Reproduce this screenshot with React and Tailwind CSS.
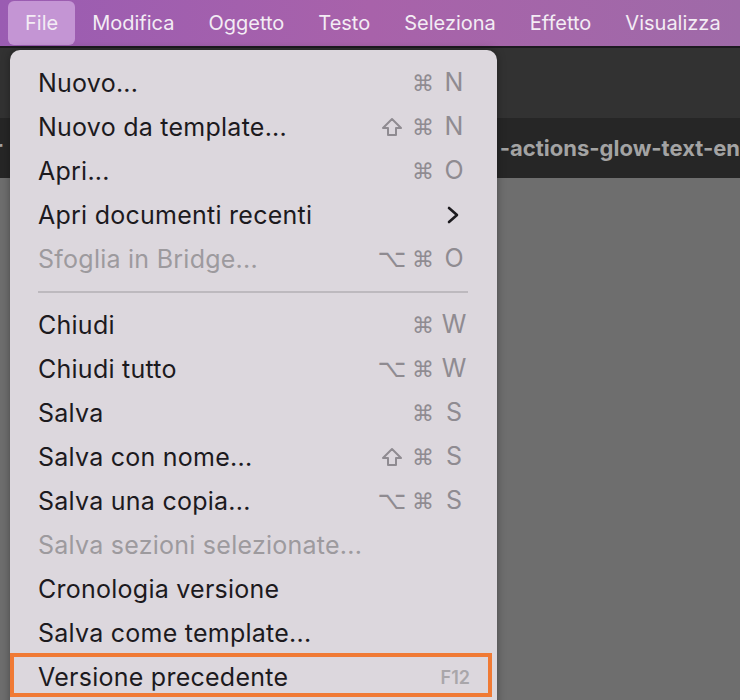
import React from "react";

const FONT = { fontFamily: "Inter, 'DejaVu Sans', sans-serif" };

const menubar = ["File", "Modifica", "Oggetto", "Testo", "Seleziona", "Effetto", "Visualizza"];

// mod: extra modifier before ⌘ ("shift" | "opt"), key: letter on the right
const items = [
  { label: "Nuovo...", key: "N" },
  { label: "Nuovo da template...", mod: "shift", key: "N" },
  { label: "Apri...", key: "O" },
  { label: "Apri documenti recenti", submenu: true },
  { label: "Sfoglia in Bridge...", mod: "opt", key: "O", disabled: true },
  { separator: true },
  { label: "Chiudi", key: "W" },
  { label: "Chiudi tutto", mod: "opt", key: "W" },
  { label: "Salva", key: "S" },
  { label: "Salva con nome...", mod: "shift", key: "S" },
  { label: "Salva una copia...", mod: "opt", key: "S" },
  { label: "Salva sezioni selezionate...", disabled: true },
  { label: "Cronologia versione" },
  { label: "Salva come template..." },
  { label: "Versione precedente", fkey: "F12", outlined: true },
];

const ShiftIcon = () => (
  <svg width="22" height="20" viewBox="0 0 22 20">
    <path d="M11 2 L20 11 L15 11 L15 18 L7 18 L7 11 L2 11 Z" fill="none" stroke="#8f8b91" strokeWidth="2" strokeLinejoin="round" />
  </svg>
);

const Shortcut = ({ mod, k }) => (
  <div className="flex items-center gap-[3px] text-[25px] text-[#8f8b91]">
    <span className="w-[28px] flex justify-center" style={{ fontFamily: "'DejaVu Sans', sans-serif" }}>
      {mod === "shift" ? <ShiftIcon /> : mod === "opt" ? "⌥" : ""}
    </span>
    <span className="w-[28px] text-center text-[22px]" style={{ fontFamily: "'DejaVu Sans', sans-serif" }}>⌘</span>
    <span className="w-[28px] text-center">{k}</span>
  </div>
);

const MenuRow = ({ item }) => {
  if (item.separator) {
    return (
      <div className="h-[22px] flex items-center pl-[28px] pr-[29px]">
        <div className="h-[2px] w-full bg-[#bdb9be]" />
      </div>
    );
  }
  return (
    <div className="relative h-[44px] flex items-center justify-between pl-[28px] pr-[29px]">
      <span className={"text-[25px] tracking-[0.01em] leading-none " + (item.disabled ? "text-[#9d9a9e]" : "text-[#1c1a1e]")}>
        {item.label}
      </span>
      {item.key && <Shortcut mod={item.mod} k={item.key} />}
      {item.submenu && (
        <svg width="14" height="18" viewBox="0 0 14 18" className="mr-[8px]">
          <polyline points="3,2 11,9 3,16" fill="none" stroke="#1c1a1e" strokeWidth="2.6" strokeLinecap="round" strokeLinejoin="round" />
        </svg>
      )}
      {item.fkey && <span className="text-[18px] font-semibold text-[#a9a6aa] mr-[-2px]">{item.fkey}</span>}
      {item.outlined && (
        <div className="absolute left-0 right-[5px] top-[-2px] bottom-[2px] border-4 border-[#f07a35]" />
      )}
    </div>
  );
};

export default function App() {
  return (
    <div className="relative w-[740px] h-[700px] overflow-hidden bg-[#6e6e6e]" style={FONT}>
      {/* menubar */}
      <div className="h-[48px] flex items-center pl-[8px] bg-gradient-to-r from-[#9a5cb2] via-[#a862aa] to-[#9f6aa8] border-b-2 border-[#1d1a20]">
        {menubar.map((m, i) => (
          <div
            key={m}
            className={
              "h-[44px] flex items-center px-[17px] text-[20px] text-[#f3ecf4] rounded-[6px] " +
              (i === 0 ? "bg-[#c495d4]" : "")
            }
          >
            {m}
          </div>
        ))}
      </div>

      {/* app chrome behind the menu */}
      <div className="h-[70px] bg-[#323232]" />
      <div className="h-[60px] bg-[#262626] flex items-center text-[22px] font-bold text-[#a3a3a3] whitespace-nowrap">
        <div className="w-[10px] overflow-hidden flex justify-end">
          <span>er</span>
        </div>
        <span className="ml-[497px]">-actions-glow-text-en</span>
      </div>

      {/* File menu */}
      <div className="absolute left-[10px] top-[50px] w-[487px] h-[660px] pt-[11px] rounded-t-[10px] bg-[#dcd7dd] shadow-[0_0_8px_rgba(0,0,0,0.35)]">
        {items.map((it, i) => (
          <MenuRow key={i} item={it} />
        ))}
      </div>
    </div>
  );
}
